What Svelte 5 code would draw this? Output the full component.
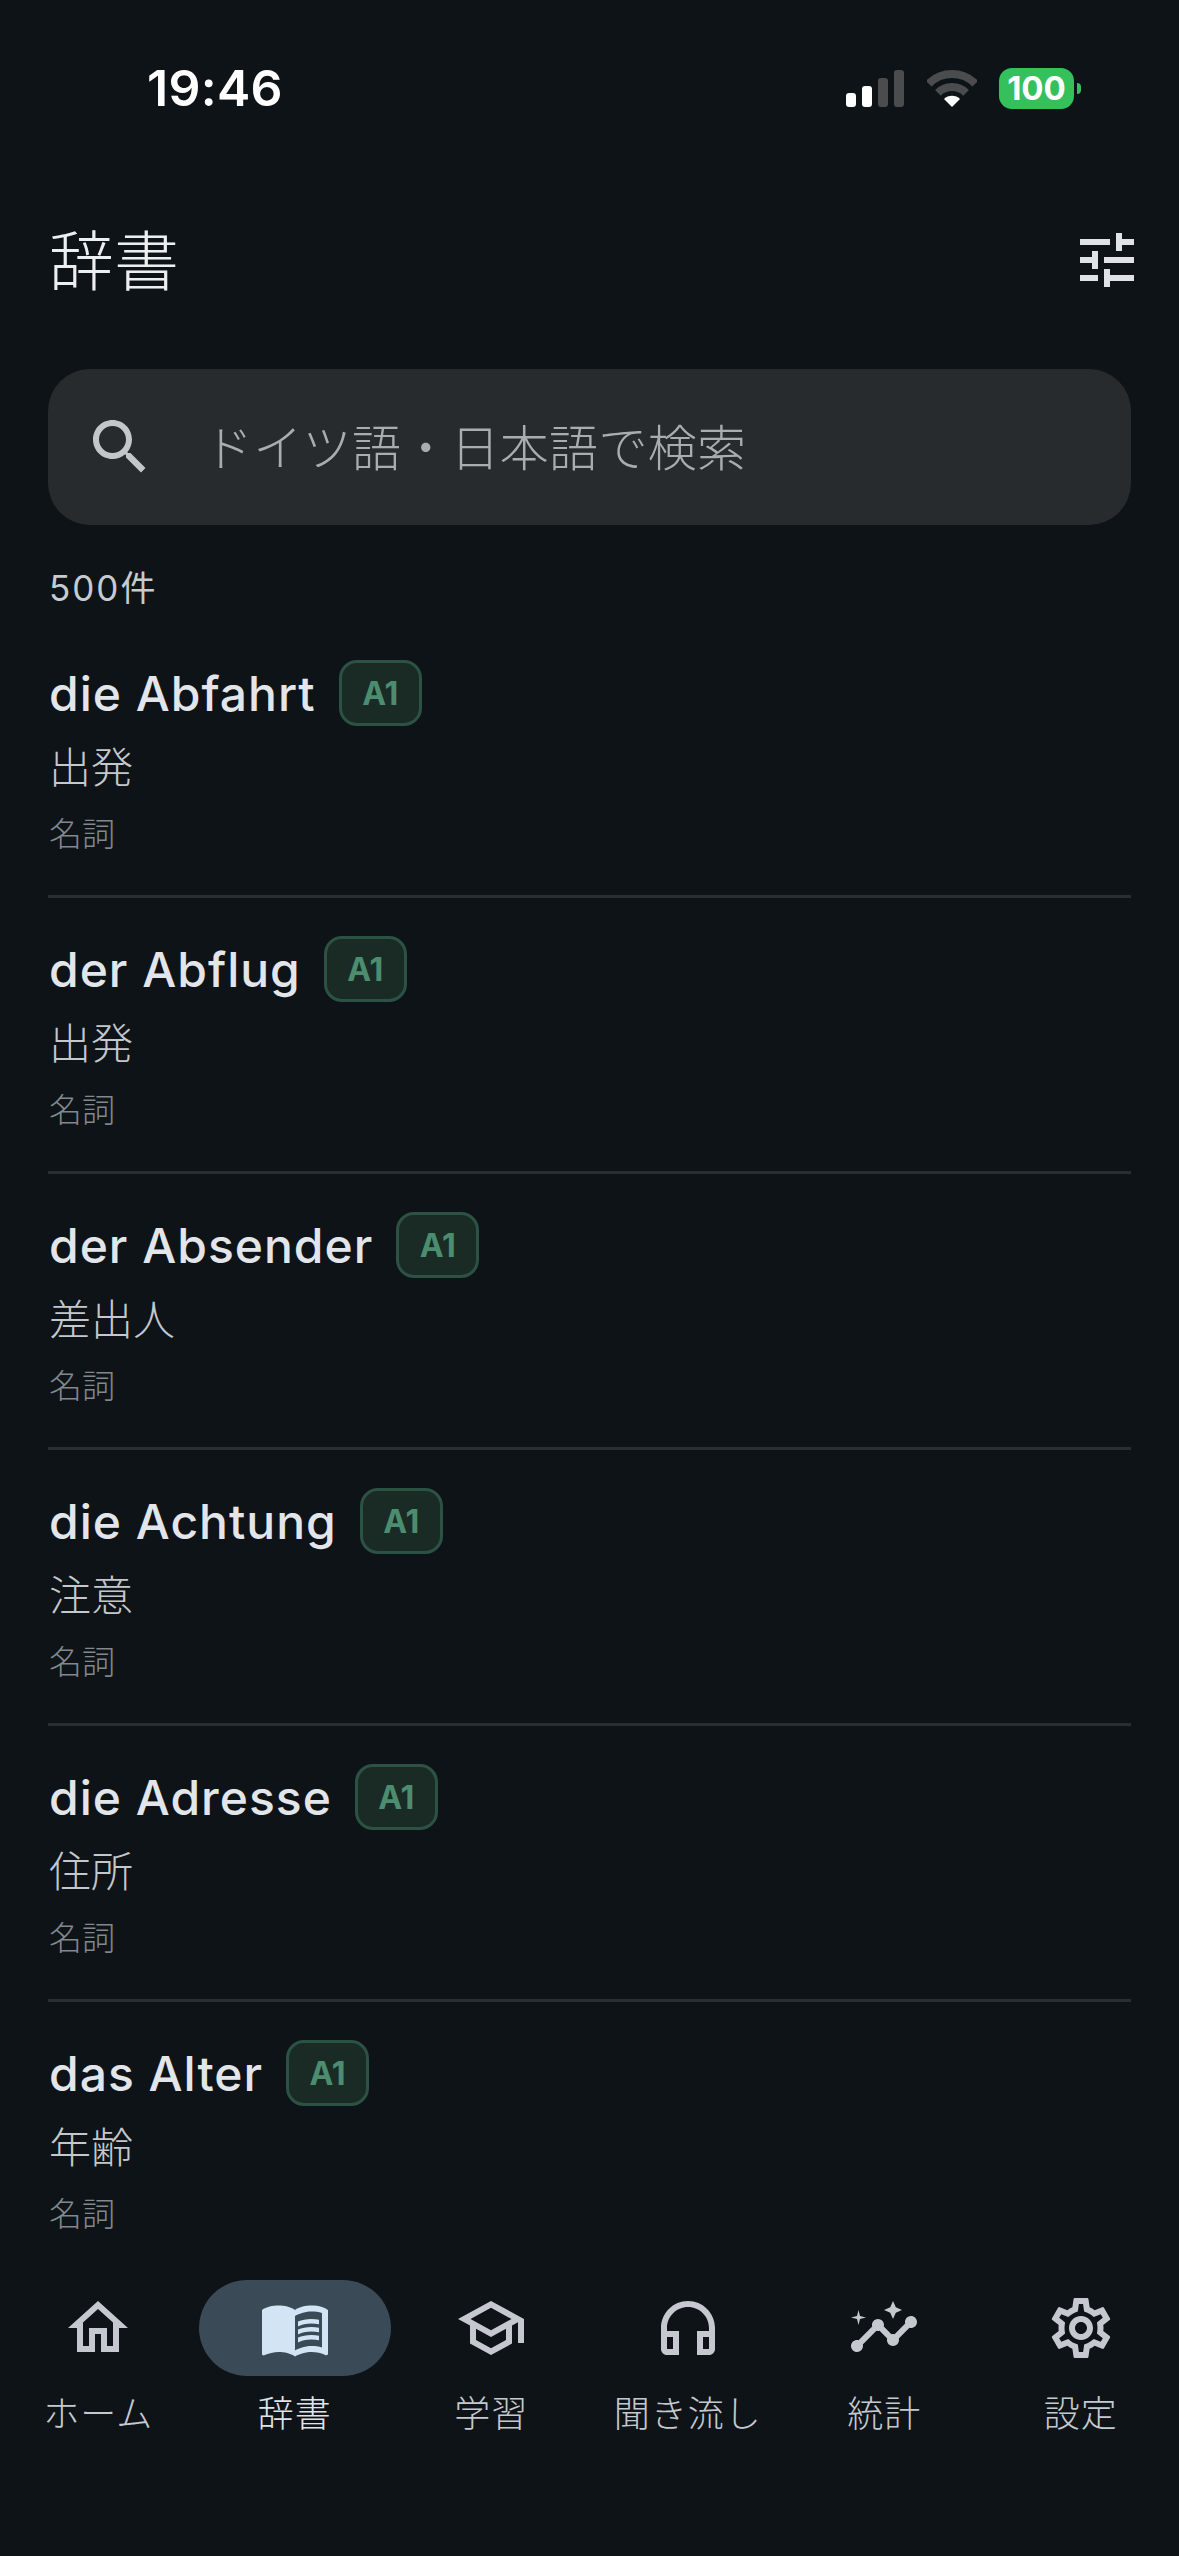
<script lang="ts">
	const entries = [
		{ word: 'die Abfahrt', meaning: '出発' },
		{ word: 'der Abflug', meaning: '出発' },
		{ word: 'der Absender', meaning: '差出人' },
		{ word: 'die Achtung', meaning: '注意' },
		{ word: 'die Adresse', meaning: '住所' },
		{ word: 'das Alter', meaning: '年齢' },
	]

	// Material icon paths, 24x24
	const tabs = [
		{
			label: 'ホーム',
			paths: ['M12 5.69l5 4.5V18h-2v-6H9v6H7v-7.81l5-4.5M12 3L2 12h3v8h6v-6h2v6h6v-8h3L12 3z'],
		},
		{
			label: '辞書',
			active: true,
			paths: [
				'M21 5c-1.11-.35-2.33-.5-3.5-.5-1.95 0-4.05.4-5.5 1.5-1.45-1.1-3.55-1.5-5.5-1.5S2.45 4.9 1 6v14.65c0 .25.25.5.5.5.1 0 .15-.05.25-.05C3.1 20.45 5.05 20 6.5 20c1.95 0 4.05.4 5.5 1.5 1.35-.85 3.8-1.5 5.5-1.5 1.65 0 3.35.3 4.75 1.05.1.05.15.05.25.05.25 0 .5-.25.5-.5V6c-.6-.45-1.25-.75-2-1zm0 13.5c-1.1-.35-2.3-.5-3.5-.5-1.7 0-4.15.65-5.5 1.5V8c1.35-.85 3.8-1.5 5.5-1.5 1.2 0 2.4.15 3.5.5v11.5z',
				'M17.5 10.5c.88 0 1.73.09 2.5.26V9.24c-.79-.15-1.64-.24-2.5-.24-1.7 0-3.24.29-4.5.83v1.66c1.13-.64 2.7-.99 4.5-.99zM13 12.49v1.66c1.13-.64 2.7-.99 4.5-.99.88 0 1.73.09 2.5.26V11.9c-.79-.15-1.64-.24-2.5-.24-1.7 0-3.24.3-4.5.83zM17.5 14.33c-1.7 0-3.24.29-4.5.83v1.66c1.13-.64 2.7-.99 4.5-.99.88 0 1.73.09 2.5.26v-1.52c-.79-.16-1.64-.24-2.5-.24z',
			],
		},
		{
			label: '学習',
			paths: ['M12 3L1 9l4 2.18v6L12 21l7-3.82v-6l2-1.09V17h2V9L12 3zm6.82 6L12 12.72 5.18 9 12 5.28 18.82 9zM17 15.99l-5 2.73-5-2.73v-3.72L12 15l5-2.73v3.72z'],
		},
		{
			label: '聞き流し',
			paths: ['M12 3c-4.97 0-9 4.03-9 9v7c0 1.1.9 2 2 2h4v-8H5v-1c0-3.87 3.13-7 7-7s7 3.13 7 7v1h-4v8h4c1.1 0 2-.9 2-2v-7c0-4.97-4.03-9-9-9zM7 15v4H5v-4h2zm12 4h-2v-4h2v4z'],
		},
		{
			label: '統計',
			paths: [
				'M21 8c-1.45 0-2.26 1.44-1.93 2.51l-3.55 3.56c-.3-.09-.74-.09-1.04 0l-2.55-2.55C12.27 10.45 11.46 9 10 9c-1.45 0-2.27 1.44-1.93 2.52l-4.56 4.55C2.44 15.74 1 16.55 1 18c0 1.1.9 2 2 2 1.45 0 2.26-1.44 1.93-2.51l4.55-4.56c.3.09.74.09 1.04 0l2.55 2.55C12.73 16.55 13.54 18 15 18c1.45 0 2.27-1.44 1.93-2.52l3.56-3.55c1.07.33 2.51-.48 2.51-1.93 0-1.1-.9-2-2-2z',
				'M15 9l.94-2.07L18 6l-2.06-.93L15 3l-.92 2.07L12 6l2.08.93z',
				'M3.5 11L4 9l2-.5L4 8l-.5-2L3 8l-2 .5L3 9z',
			],
		},
		{
			label: '設定',
			paths: ['M19.43 12.98c.04-.32.07-.64.07-.98 0-.34-.03-.66-.07-.98l2.11-1.65c.19-.15.24-.42.12-.64l-2-3.46c-.09-.16-.26-.25-.44-.25-.06 0-.12.01-.17.03l-2.49 1c-.52-.4-1.08-.73-1.69-.98l-.38-2.65C14.46 2.18 14.25 2 14 2h-4c-.25 0-.46.18-.49.42l-.38 2.65c-.61.25-1.17.59-1.69.98l-2.49-1c-.06-.02-.12-.03-.18-.03-.17 0-.34.09-.43.25l-2 3.46c-.13.22-.07.49.12.64l2.11 1.65c-.04.32-.07.65-.07.98 0 .33.03.66.07.98l-2.11 1.65c-.19.15-.24.42-.12.64l2 3.46c.09.16.26.25.44.25.06 0 .12-.01.17-.03l2.49-1c.52.4 1.08.73 1.69.98l.38 2.65c.03.24.24.42.49.42h4c.25 0 .46-.18.49-.42l.38-2.65c.61-.25 1.17-.59 1.69-.98l2.49 1c.06.02.12.03.18.03.17 0 .34-.09.43-.25l2-3.46c.12-.22.07-.49-.12-.64l-2.11-1.65zm-1.98-1.71c.04.31.05.52.05.73 0 .21-.02.43-.05.73l-.14 1.13.89.7 1.08.84-.7 1.21-1.27-.51-1.04-.42-.9.68c-.43.32-.84.56-1.25.73l-1.06.43-.16 1.13-.2 1.35h-1.4l-.19-1.35-.16-1.13-1.06-.43c-.43-.18-.83-.41-1.23-.71l-.91-.7-1.06.43-1.27.51-.7-1.21 1.08-.84.89-.7-.14-1.13c-.03-.31-.05-.54-.05-.74s.02-.43.05-.73l.14-1.13-.89-.7-1.08-.84.7-1.21 1.27.51 1.04.42.9-.68c.43-.32.84-.56 1.25-.73l1.06-.43.16-1.13.2-1.35h1.39l.19 1.35.16 1.13 1.06.43c.43.18.83.41 1.23.71l.91.7 1.06-.43 1.27-.51.7 1.21-1.07.85-.89.7.14 1.13zM12 8c-2.21 0-4 1.79-4 4s1.79 4 4 4 4-1.79 4-4-1.79-4-4-4zm0 6c-1.1 0-2-.9-2-2s.9-2 2-2 2 .9 2 2-.9 2-2 2z'],
		},
	]

	const signalBars = [
		{ x: 0, h: 14, on: true },
		{ x: 16, h: 21, on: true },
		{ x: 32, h: 29, on: false },
		{ x: 48, h: 37, on: false },
	]
</script>

<div class="app">
	<div class="status">
		<span class="time">19:46</span>
		<div class="status-icons">
			<svg class="signal" width="58" height="37" viewBox="0 0 58 37">
				{#each signalBars as bar}
					<rect x={bar.x} y={37 - bar.h} width="10" height={bar.h} rx="3" fill={bar.on ? '#fff' : '#4a4c4e'} />
				{/each}
			</svg>
			<svg class="wifi" width="50" height="37" viewBox="0 0 50 37">
				<path d="M1.7 13.7a33 33 0 0 1 46.6 0" fill="none" stroke="#4a4c4e" stroke-width="8" />
				<path d="M10.9 22.9a20 20 0 0 1 28.2 0" fill="none" stroke="#4a4c4e" stroke-width="8" />
				<path d="M25 37l-8-8a11.3 11.3 0 0 1 16 0z" fill="#fff" />
			</svg>
			<div class="battery">
				<span>100</span>
				<i class="nub"></i>
			</div>
		</div>
	</div>

	<header class="header">
		<h1>辞書</h1>
		<svg class="icon" viewBox="0 0 24 24" fill="#dfe3e7">
			<path d="M3 17v2h6v-2H3zM3 5v2h10V5H3zm10 16v-2h8v-2h-8v-2h-2v6h2zM7 9v2H3v2h4v2h2V9H7zm14 4v-2H11v2h10zm-6-4h2V7h4V5h-4V3h-2v6z" />
		</svg>
	</header>

	<div class="search">
		<svg class="icon" viewBox="0 0 24 24" fill="#c3c7cb">
			<path d="M15.5 14h-.79l-.28-.27C15.41 12.59 16 11.11 16 9.5 16 5.91 13.09 3 9.5 3S3 5.91 3 9.5 5.91 16 9.5 16c1.61 0 3.09-.59 4.23-1.57l.27.28v.79l5 4.99L20.49 19l-4.99-5zm-6 0C7.01 14 5 11.99 5 9.5S7.01 5 9.5 5 14 7.01 14 9.5 11.99 14 9.5 14z" />
		</svg>
		<span class="placeholder">ドイツ語・日本語で検索</span>
	</div>

	<div class="count">500件</div>

	<main class="list">
		{#each entries as entry}
			<article class="entry">
				<div class="title-row">
					<span class="word">{entry.word}</span>
					<span class="chip">A1</span>
				</div>
				<div class="meaning">{entry.meaning}</div>
				<div class="kind">名詞</div>
			</article>
		{/each}
	</main>

	<nav class="tabs">
		{#each tabs as tab}
			<div class="tab" class:active={tab.active}>
				<div class="pill">
					<svg class="icon" viewBox="0 0 24 24" fill="currentColor">
						{#each tab.paths as d}
							<path {d} />
						{/each}
					</svg>
				</div>
				<span class="tab-label">{tab.label}</span>
			</div>
		{/each}
	</nav>
</div>

<style>
	:global(body) {
		background: #0e1318;
	}

	.app {
		--latin: Inter, 'Noto Sans CJK JP', sans-serif;
		--jp: 'Noto Sans CJK JP', sans-serif;
		width: 1179px;
		height: 2556px;
		display: flex;
		flex-direction: column;
		overflow: hidden;
		background: #0e1318;
		font-family: var(--jp);
	}

	.icon {
		width: 72px;
		height: 72px;
		display: block;
		flex: none;
	}

	.status {
		height: 176px;
		flex: none;
		display: flex;
		align-items: center;
		justify-content: space-between;
		padding: 0 105px 0 147px;
	}

	.time {
		font-family: var(--latin);
		font-size: 50px;
		font-weight: 600;
		letter-spacing: 0.3px;
		color: #fff;
	}

	.status-icons {
		display: flex;
		align-items: center;
	}

	.wifi {
		margin-left: 23px;
	}

	.battery {
		position: relative;
		width: 75px;
		height: 41px;
		margin-left: 22px;
		border-radius: 13px;
		background: #34c05a;
		color: #fff;
		font-family: var(--latin);
		font-size: 33px;
		font-weight: 700;
		line-height: 41px;
		text-align: center;
	}

	.nub {
		position: absolute;
		left: 78px;
		top: 15px;
		width: 4px;
		height: 11px;
		border-radius: 0 4px 4px 0;
		background: #34c05a;
	}

	.header {
		height: 168px;
		flex: none;
		display: flex;
		align-items: center;
		justify-content: space-between;
		padding: 0 36px 0 49px;
		margin-bottom: 25px;
	}

	h1 {
		margin: 0 0 6px;
		font-size: 65px;
		font-weight: 300;
		color: #eceff2;
	}

	.search {
		height: 156px;
		flex: none;
		margin: 0 48px;
		padding-left: 36px;
		display: flex;
		align-items: center;
		gap: 48px;
		border-radius: 42px;
		background: #272b2e;
		font-size: 49px;
		font-weight: 300;
		letter-spacing: 0.3px;
		color: #a9adb1;
	}

	.placeholder {
		margin-bottom: 6px;
	}

	.count {
		height: 97px;
		flex: none;
		padding: 24px 0 0 49px;
		box-sizing: border-box;
		display: flex;
		align-items: center;
		font-family: var(--latin);
		font-size: 35px;
		letter-spacing: 2px;
		color: #c6cbd0;
	}

	.list {
		flex: 1;
		min-height: 0;
		overflow: hidden;
		padding: 0 48px;
	}

	.entry {
		height: 276px;
		box-sizing: border-box;
		padding: 38px 0 0 1px;
		border-bottom: 3px solid #2a2e32;
	}

	.title-row {
		height: 66px;
		display: flex;
		align-items: center;
		gap: 23px;
	}

	.word {
		font-family: var(--latin);
		font-size: 48px;
		font-weight: 500;
		letter-spacing: 1px;
		color: #e2e6ea;
	}

	.chip {
		width: 83px;
		height: 66px;
		box-sizing: border-box;
		display: flex;
		align-items: center;
		justify-content: center;
		border: 3px solid #2b5243;
		border-radius: 18px;
		background: #1a2b26;
		font-family: var(--latin);
		font-size: 32px;
		font-weight: 700;
		color: #4c8d70;
	}

	.meaning {
		margin-top: 14px;
		font-size: 42px;
		font-weight: 300;
		line-height: 50px;
		color: #c4c8cc;
	}

	.kind {
		margin-top: 20px;
		font-size: 33px;
		font-weight: 300;
		line-height: 44px;
		color: #83888d;
	}

	.tabs {
		height: 294px;
		flex: none;
		display: grid;
		grid-template-columns: repeat(6, 1fr);
		padding-top: 18px;
		box-sizing: border-box;
		background: #0e1318;
	}

	.tab {
		display: flex;
		flex-direction: column;
		align-items: center;
		gap: 10px;
		color: #c5c9cf;
	}

	.pill {
		width: 192px;
		height: 96px;
		display: flex;
		align-items: center;
		justify-content: center;
		border-radius: 48px;
	}

	.tab.active .pill {
		background: #3a4a57;
		color: #d3e4f5;
	}

	.tab.active .tab-label {
		color: #e0e4e8;
	}

	.tab-label {
		font-size: 36px;
		font-weight: 300;
		letter-spacing: 1px;
		line-height: 50px;
		white-space: nowrap;
	}
</style>
